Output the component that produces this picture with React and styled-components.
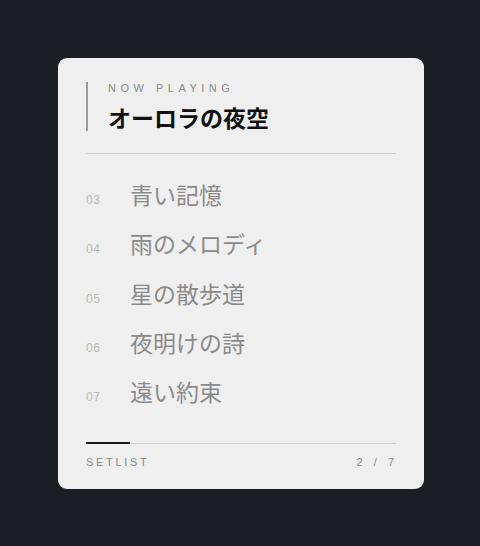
import React from "react";
import styled, { createGlobalStyle } from "styled-components";

const GlobalStyle = createGlobalStyle`
  html, body {
    margin: 0;
    padding: 0;
    background: #1b1e25;
  }
  body {
    font-family: "Liberation Sans", "Noto Sans CJK JP", sans-serif;
  }
`;

const Page = styled.div`
  width: 480px;
  height: 546px;
  padding: 58px 0 0 58px;
  box-sizing: border-box;
`;

const Card = styled.div`
  width: 366px;
  height: 431px;
  box-sizing: border-box;
  background: #efefef;
  border-radius: 9px;
  padding: 24px 28px 0;
  display: flex;
  flex-direction: column;
`;

const Header = styled.div`
  border-left: 2px solid #9a9a9a;
  padding-left: 20px;
  display: flex;
  flex-direction: column;
  gap: 8px;
`;

const Label = styled.div`
  font-family: "Liberation Sans", sans-serif;
  font-size: 11px;
  letter-spacing: 4.5px;
  color: #8a8a8a;
  line-height: 13px;
`;

const Title = styled.h1`
  margin: 0;
  font-family: "Noto Sans CJK JP", sans-serif;
  font-weight: 700;
  font-size: 23px;
  line-height: 28px;
  color: #111;
`;

const Rule = styled.hr`
  border: none;
  border-top: 1px solid #cfcfcf;
  margin: 22px 0 0;
`;

const List = styled.ol`
  list-style: none;
  margin: 16px 0 0;
  padding: 0;
  display: flex;
  flex-direction: column;
`;

const Row = styled.li`
  display: flex;
  align-items: baseline;
`;

const Num = styled.span`
  width: 44px;
  font-family: "Liberation Sans", sans-serif;
  font-size: 12px;
  color: #b9b9b9;
  letter-spacing: 0.6px;
`;

const Song = styled.span`
  font-family: "Noto Sans CJK JP", sans-serif;
  font-size: 23px;
  line-height: 49.25px;
  color: #8a8a8a;
  font-weight: 400;
`;

const Progress = styled.div`
  margin-top: 27px;
  height: 1px;
  background: #cdcdcd;
  display: flex;
`;

const Fill = styled.div`
  height: 2px;
  margin-top: -1px;
  background: #1a1a1a;
`;

const Footer = styled.div`
  display: flex;
  justify-content: space-between;
  margin-top: 12px;
  font-family: "Liberation Sans", sans-serif;
  font-size: 11px;
  line-height: 13px;
  letter-spacing: 2.7px;
  color: #8a8a8a;
`;

const Count = styled.span`
  letter-spacing: 4px;
  margin-right: -2px;
`;

const songs = [
  ["03", "青い記憶"],
  ["04", "雨のメロディ"],
  ["05", "星の散歩道"],
  ["06", "夜明けの詩"],
  ["07", "遠い約束"],
];

export default function App() {
  return (
    <>
      <GlobalStyle />
      <Page>
        <Card>
          <Header>
            <Label>NOW PLAYING</Label>
            <Title>オーロラの夜空</Title>
          </Header>
          <Rule />
          <List>
            {songs.map(([n, t]) => (
              <Row key={n}>
                <Num>{n}</Num>
                <Song>{t}</Song>
              </Row>
            ))}
          </List>
          <Progress>
            <Fill style={{ width: `${(1 / 7) * 100}%` }} />
          </Progress>
          <Footer>
            <span>SETLIST</span>
            <Count>2 / 7</Count>
          </Footer>
        </Card>
      </Page>
    </>
  );
}
